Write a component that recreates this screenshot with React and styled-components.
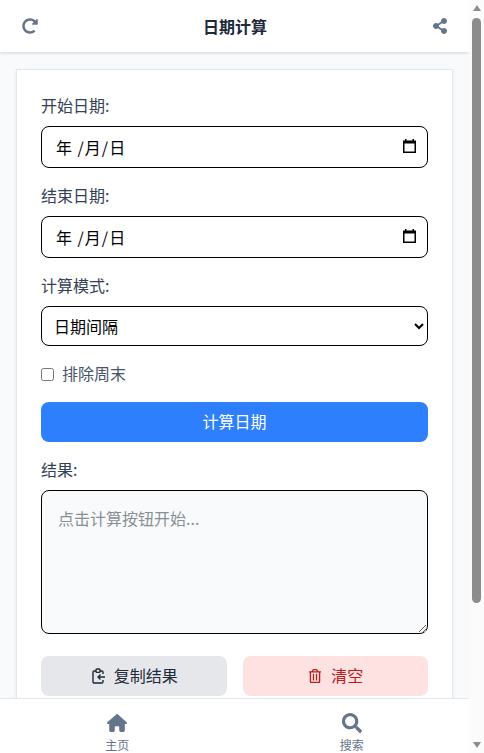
import React from "react";
import styled, { createGlobalStyle } from "styled-components";
import { FaRedoAlt, FaShareAlt, FaSearch, FaRegTrashAlt } from "react-icons/fa";
import { FaHouse } from "react-icons/fa6";

const FONT = `"Noto Sans CJK SC", "Noto Sans", sans-serif`;

const Global = createGlobalStyle`
  html, body { margin: 0; padding: 0; height: 100%; overflow: hidden; background: #f8fafc; }
  #root { height: 100%; }
  * { box-sizing: border-box; }
`;

const Shell = styled.div`
  display: flex;
  width: 484px;
  height: 753px;
  font-family: ${FONT};
`;

const Page = styled.div`
  flex: 1;
  min-width: 0;
  display: flex;
  flex-direction: column;
  background: #f8fafc;
  overflow: hidden;
`;

const Header = styled.header`
  flex: none;
  height: 52px;
  padding: 0 21px 0 22px;
  display: flex;
  align-items: center;
  justify-content: space-between;
  background: #fff;
  box-shadow: 0 1px 3px rgba(30, 41, 59, 0.18);
  position: relative;
  z-index: 1;
`;

const HeaderIcon = styled.span`
  display: flex;
  color: #64748b;
  font-size: 16px;
`;

const Title = styled.h1`
  margin: 0;
  font-size: 16px;
  line-height: 24px;
  font-weight: 700;
  color: #1e293b;
`;

const Content = styled.main`
  flex: 1;
  min-height: 0;
  overflow: hidden;
  padding: 17px 16px 0;
`;

const Card = styled.section`
  background: #fff;
  border: 1px solid #e2e8f0;
  box-shadow: 0 1px 3px rgba(30, 41, 59, 0.08);
  padding: 23px 24px 24px;
`;

const Field = styled.div`
  margin-bottom: ${(p) => p.$gap ?? 16}px;
`;

const Label = styled.label`
  display: block;
  font-size: 16px;
  line-height: 24px;
  color: #334155;
  margin-bottom: 9px;
`;

const DateBox = styled.div`
  height: 42px;
  padding: 0 11px 0 14px;
  display: flex;
  align-items: center;
  justify-content: space-between;
  border: 1px solid #000;
  border-radius: 8px;
  background: #fff;
  color: #000;
  font-size: 16px;
`;

const DateText = styled.span`
  white-space: pre;
  letter-spacing: 1px;
`;

const CalendarGlyph = styled.svg`
  margin-top: -2px;
`;

const Select = styled.select`
  display: block;
  width: 100%;
  height: 40px;
  padding: 0 8px 0 8px;
  border: 1px solid #000;
  border-radius: 8px;
  background: #fff;
  color: #000;
  font-family: ${FONT};
  font-size: 16px;
`;

const CheckRow = styled.label`
  display: flex;
  align-items: center;
  height: 24px;
  padding-bottom: 2px;
  margin: 16px 0 16px;
  font-size: 16px;
  color: #475569;
`;

const Check = styled.input`
  width: 13px;
  height: 13px;
  margin: 2px 8px 0 0;
`;

const Primary = styled.button`
  display: block;
  width: 100%;
  height: 40px;
  padding: 0 0 2px;
  border: 0;
  border-radius: 8px;
  background: #2d7ffe;
  color: #fff;
  font-family: ${FONT};
  font-size: 16px;
`;

const ResultField = styled.div`
  margin-top: 15px;
`;

const Result = styled.textarea`
  display: block;
  width: 100%;
  height: 144px;
  padding: 15px 16px;
  border: 1px solid #000;
  border-radius: 8px;
  background: #f8fafc;
  font-family: ${FONT};
  font-size: 16px;
  line-height: 24px;
  &::placeholder { color: #8a8f96; opacity: 1; }
`;

const Actions = styled.div`
  display: grid;
  grid-template-columns: 1fr 1fr;
  gap: 16px;
  margin-top: 22px;
`;

const Action = styled.button`
  height: 40px;
  padding: 0 0 0 ${(p) => (p.$danger ? 1 : 2)}px;
  border: 0;
  border-radius: 8px;
  display: flex;
  align-items: center;
  justify-content: center;
  gap: ${(p) => (p.$danger ? 9 : 8)}px;
  font-family: ${FONT};
  font-size: 16px;
  background: ${(p) => (p.$danger ? "#fee2e2" : "#e5e7eb")};
  color: ${(p) => (p.$danger ? "#b91c1c" : "#1f2937")};
`;

const ActionText = styled.span`
  margin-bottom: 2px;
`;

const Nav = styled.nav`
  flex: none;
  height: 55px;
  display: grid;
  grid-template-columns: 1fr 1fr;
  background: #fff;
  border-top: 1px solid #e2e8f0;
  position: relative;
  z-index: 1;
`;

const NavItem = styled.a`
  display: flex;
  flex-direction: column;
  align-items: center;
  padding-top: 14px;
  color: #64748b;
  font-size: 20px;
  overflow: hidden;
`;

const NavLabel = styled.span`
  font-size: 12px;
  line-height: 16px;
  margin-top: 4px;
`;

const Scrollbar = styled.div`
  flex: none;
  width: 15px;
  height: 753px;
  background: #fbfbfb;
  display: flex;
  flex-direction: column;
  align-items: center;
  overflow: hidden;
`;

const Arrow = styled.div`
  flex: none;
  width: 0;
  height: 0;
  margin: ${(p) => (p.$down ? "auto 0 5px" : "5px 0 0")};
  border-left: 4px solid transparent;
  border-right: 4px solid transparent;
  ${(p) => (p.$down ? "border-top: 6px solid #8c8c8c;" : "border-bottom: 6px solid #8c8c8c;")}
`;

const Thumb = styled.div`
  flex: none;
  width: 9px;
  height: 585px;
  margin-top: 7px;
  border-radius: 5px;
  background: #8c8c8c;
`;

const CalendarIcon = () => (
  <CalendarGlyph width="13" height="14" viewBox="0 0 13 14" fill="none">
    <path d="M2 0h1.5v1.5h6V0H11v1.5h2V14H0V1.5h2z" fill="#000" />
    <rect x="1.5" y="4.5" width="10" height="8" fill="#fff" />
  </CalendarGlyph>
);

const PasteIcon = () => (
  <svg width="14" height="16" viewBox="0 0 14 16" fill="none" stroke="currentColor" strokeWidth="1.4">
    <path d="M4 3H2.2A1.2 1.2 0 0 0 1 4.2v9.6A1.2 1.2 0 0 0 2.2 15h7.6a1.2 1.2 0 0 0 1.2-1.2V12" />
    <path d="M8 3h1.8A1.2 1.2 0 0 1 11 4.2V6" />
    <rect x="4" y="1" width="4" height="3.4" rx=".8" />
    <path d="M13 9H6M8.5 6.5 6 9l2.5 2.5" />
  </svg>
);

export default function App() {
  return (
    <Shell>
      <Global />
      <Page>
        <Header>
          <HeaderIcon><FaRedoAlt /></HeaderIcon>
          <Title>日期计算</Title>
          <HeaderIcon><FaShareAlt /></HeaderIcon>
        </Header>
        <Content>
          <Card>
            <Field $gap={15}>
              <Label>开始日期:</Label>
              <DateBox><DateText>年 /月/日</DateText><CalendarIcon /></DateBox>
            </Field>
            <Field $gap={15}>
              <Label>结束日期:</Label>
              <DateBox><DateText>年 /月/日</DateText><CalendarIcon /></DateBox>
            </Field>
            <Field $gap={0}>
              <Label>计算模式:</Label>
              <Select defaultValue="gap">
                <option value="gap">日期间隔</option>
              </Select>
            </Field>
            <CheckRow><Check type="checkbox" />排除周末</CheckRow>
            <Primary>计算日期</Primary>
            <ResultField>
              <Label>结果:</Label>
              <Result placeholder="点击计算按钮开始..." readOnly />
            </ResultField>
            <Actions>
              <Action><PasteIcon /><ActionText>复制结果</ActionText></Action>
              <Action $danger><FaRegTrashAlt size={14} /><ActionText>清空</ActionText></Action>
            </Actions>
          </Card>
        </Content>
        <Nav>
          <NavItem><FaHouse /><NavLabel>主页</NavLabel></NavItem>
          <NavItem><FaSearch /><NavLabel>搜索</NavLabel></NavItem>
        </Nav>
      </Page>
      <Scrollbar>
        <Arrow />
        <Thumb />
        <Arrow $down />
      </Scrollbar>
    </Shell>
  );
}
